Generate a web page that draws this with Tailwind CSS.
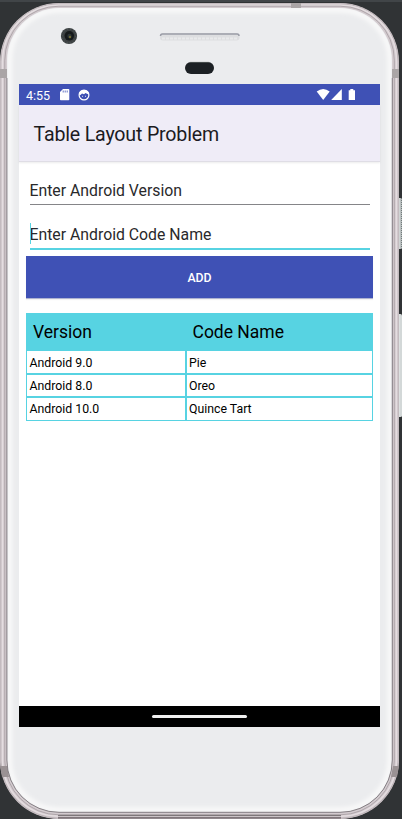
<!DOCTYPE html>
<html lang="en">
<head>
<meta charset="utf-8">
<title>Table Layout Problem</title>
<script src="https://cdn.jsdelivr.net/npm/@tailwindcss/browser@4"></script>
</head>
<body class="bg-[#303335] overflow-hidden">
<div class="relative w-[402px] h-[819px] overflow-hidden font-[Roboto,sans-serif]">
  <!-- Device chassis -->
  <svg class="absolute inset-0" width="402" height="819" viewBox="0 0 402 819" fill="none">
    <defs>
      <filter id="soft"><feGaussianBlur stdDeviation="2"/></filter>
      <clipPath id="face"><rect x="7.5" y="8" width="384" height="804" rx="52"/></clipPath>
    </defs>
    <rect width="402" height="2" fill="#414548"/>
    <rect x="397" y="198" width="5" height="51" rx="1.5" fill="#b9bfbf"/>
    <path d="M401.5 200v47" stroke="#727a7b" stroke-dasharray="1 1"/>
    <rect x="397" y="314" width="5" height="103" rx="1.5" fill="#d3d8d8"/>
    <path d="M399 198v51M399 314v103" stroke="#e8e9e9"/>
    <rect x="0" y="3" width="399" height="816" rx="59" fill="#d3cbcf"/>
    <rect x=".8" y="3.8" width="397.4" height="814.4" rx="58" stroke="#bdb4b8"/>
    <rect x="2.5" y="5.2" width="394" height="811" rx="56" stroke="#e4dde0" stroke-width="1.4"/>
    <rect x="4.8" y="6.2" width="389.5" height="808.6" rx="54" stroke="#aaa2a6" stroke-width=".9"/>
    <path d="M58 817.800H341" stroke="#81777c" stroke-width="2"/>
    <path d="M58 815.400H341" stroke="#756e72"/>
    <path d="M0 69h7v9H0zM392 69h7v9h-7zM291 3h10v5h-10z" fill="#aaa5a6"/>
    <path d="M0 766h7l2 11H2zM393 766h6l-2 11h-6z" fill="#9a9294"/>
    <rect x="7" y="8" width="385" height="804" rx="52" fill="#ebecee"/>
    <g clip-path="url(#face)"><rect x="9.5" y="10" width="380.500" height="800" rx="50" stroke="#fafafa" stroke-width="5" filter="url(#soft)"/></g>
    <path d="M6.900 78V760A52 52 0 0 0 59 812.300H340A52 52 0 0 0 392.300 760V78" stroke="#7c767a" stroke-width=".9"/>
    <!-- Camera -->
    <circle cx="69" cy="36" r="8.100" fill="#3c4142"/>
    <circle cx="69" cy="36" r="6.800" stroke="#5b6263" stroke-width=".7" stroke-dasharray="1 2"/>
    <circle cx="69.300" cy="35.800" r="4.800" fill="#15191a"/>
    <circle cx="69.500" cy="36" r="2.200" fill="#2c3435"/>
    <circle cx="70" cy="37" r="1.200" fill="#6f6b35"/>
    <!-- Speaker and sensor -->
    <rect x="160" y="33" width="79.500" height="7.500" rx="3" fill="#dddee0"/>
    <path d="M160.500 36q0-2 2-2h74.500q2 0 2 2" stroke="#9b9da7" stroke-width="1.500"/>
    <path d="M162 38.500h76" stroke="#e9eaeb" stroke-width="2" stroke-dasharray="3 1"/>
    <rect x="185" y="62" width="29" height="12" rx="6" fill="#1c2024"/>
    <path d="M190 62.400h19" stroke="#555c5b" stroke-width=".8"/>
  </svg>

  <main class="relative mt-[84px] ml-[19px] w-[361px] h-[643px] bg-white flex flex-col">
    <!-- Status bar -->
    <div class="h-[21px] shrink-0 bg-[#3f51b5] flex items-center pl-[7px] text-white">
      <span class="w-[33px] text-[12.5px] leading-[21px] pt-[2px]">4:55</span>
      <svg class="shrink-0" width="11" height="13" viewBox="0 0 11 13" fill="white"><path d="M4 1h5.500q.8 0 .8.800v9.700q0 .8-.8.800H1.800q-.8 0-.8-.8V4z"/><path d="M4.200 2.500v2M6.200 2.500v2M8.200 2.500v2" stroke="#3f51b5" stroke-width=".8"/></svg>
      <svg class="ml-[8px] shrink-0" width="12" height="12" viewBox="0 0 12 12" fill="none"><circle cx="6" cy="6" r="4.900" stroke="white" stroke-width="1.200"/><path d="M1 5.500Q1.500 1 6 1t5 4.500L9 4.800 7.500 4 6 5.200 4 4.400 2.500 6z" fill="white"/><path d="M4 7.300h.8M7.200 7.300H8" stroke="white"/></svg>
      <svg class="ml-auto mr-[22px] shrink-0" width="42" height="13" viewBox="0 0 42 13" fill="white"><path d="M.7 3.600Q7.200-1.600 13.700 3.600L7.200 12z"/><path d="M25.800 1V12H15.200z"/><path d="M34.300 1h3v1.200h1.700V12h-6.300V2.200h1.600z"/></svg>
    </div>
    <!-- App bar -->
    <header class="h-[57px] shrink-0 bg-[#efecf7] border-b border-[#dfdde5] flex items-center pl-[14.500px] pt-[3px] shadow-[0_1px_2px_#00000014]">
      <h1 class="text-[19.600px] tracking-[-0.180px] leading-6 text-[#1c1b1f]">Table Layout Problem</h1>
    </header>
    <section class="flex flex-col px-[7px]">
      <div class="mx-[3.500px] h-[43px] border-b border-[#858588] flex items-end pb-[4px] text-[15.8px] leading-[18px] text-[#29292b]">Enter Android Version</div>
      <div class="relative mx-[3.500px] h-[45px] border-b-2 border-[#57d3e2] flex items-end pb-[4px] text-[15.8px] leading-[18px] text-[#29292b]">Enter Android Code Name
        <i class="absolute left-0 top-[18px] w-px h-[21px] bg-[#57d3e2]"></i>
      </div>
      <button class="mt-[6px] h-[42px] bg-[#3f51b5] text-white text-[12.3px] leading-[44px] font-medium shadow-[0_1px_0_#aeb3d1,0_2px_1px_#0000000d]">ADD</button>
      <div class="mt-[15px] border border-[#57d3e2] bg-[#57d3e2] text-black text-[12.3px]">
        <div class="h-[37px] pb-[2px] grid grid-cols-[159px_1fr] items-center text-[17.5px] leading-6"><span class="pl-[6px]">Version</span><span class="pl-[6.500px]">Code Name</span></div>
        <div class="grid grid-cols-[157.500px_1fr] grid-rows-[22px_21px_22px] gap-x-[2px] gap-y-[2px] leading-[23px]">
          <span class="bg-white pl-[2.500px] leading-[24px]">Android 9.0</span><span class="bg-white pl-[2.500px] leading-[24px]">Pie</span>
          <span class="bg-white pl-[2.500px]">Android 8.0</span><span class="bg-white pl-[2.500px]">Oreo</span>
          <span class="bg-white pl-[2.500px]">Android 10.0</span><span class="bg-white pl-[2.500px]">Quince Tart</span>
        </div>
      </div>
    </section>
    <!-- Navigation bar -->
    <footer class="mt-auto h-[21px] bg-black flex items-center justify-center"><div class="w-[95px] h-[3px] rounded-full bg-[#f0f0f0]"></div></footer>
  </main>
</div>
</body>
</html>
